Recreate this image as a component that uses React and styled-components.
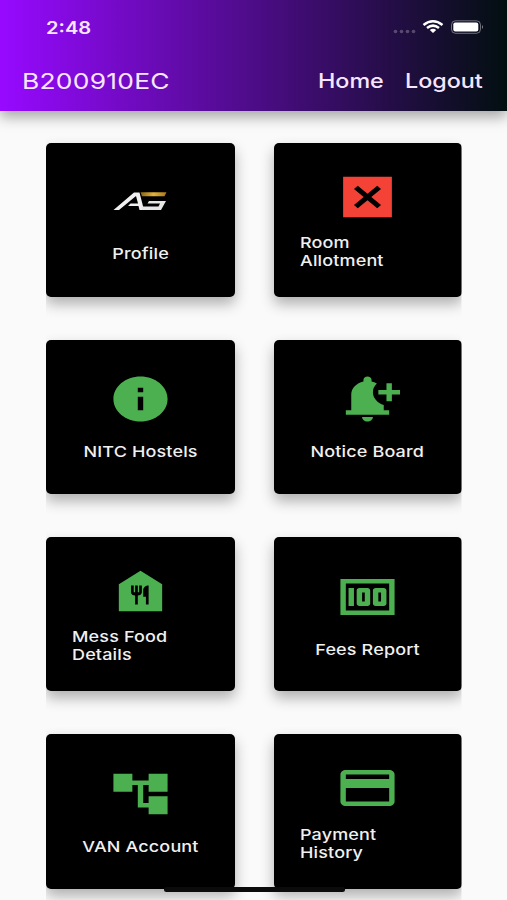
import React from 'react';
import styled, { createGlobalStyle } from 'styled-components';
import { MdAccountTree, MdFoodBank, MdInfo, MdMoney, MdNotificationAdd, MdPayment } from 'react-icons/md';

const GREEN = '#4caf50';
const RED = '#f44336';

const GlobalStyle = createGlobalStyle`
    * {
        box-sizing: border-box;
    }

    body {
        margin: 0;
        background: #fafafa;
        font-family: Inter, Roboto, sans-serif;
    }
`;

const Screen = styled.div`
    position: relative;
    height: 900px;
    overflow: hidden;
    background: #fafafa;
`;

const Header = styled.header`
    position: relative;
    height: 110.5px;
    color: #f6e6ff;
    background: linear-gradient(to right, #9709ff, #020f10);
    box-shadow: 0 6px 13px rgba(0, 0, 0, 0.34);
`;

const StatusBar = styled.div`
    display: flex;
    align-items: center;
    justify-content: space-between;
    height: 54px;
    padding: 0 23px 0 46px;
`;

const StatusIcons = styled.div`
    display: flex;
    align-items: center;
    height: 20px;

    svg {
        display: block;
    }
`;

const Wide = styled.span`
    display: inline-block;
    white-space: pre;
    transform: scaleX(${props => props.$stretch});
    transform-origin: ${props => props.$origin || 'left'} center;
`;

const Clock = styled(Wide)`
    padding-top: 2px;
    font-size: 17px;
    font-weight: 600;
`;

const NavBar = styled.nav`
    display: flex;
    align-items: center;
    height: 54px;
    padding: 0 25px 0 22px;
`;

const Title = styled(Wide)`
    flex: 1;
    font-size: 22px;
    letter-spacing: 0.2px;
`;

const NavLink = styled.a`
    width: ${props => props.$width}px;
    margin-left: 22px;
    font-size: 20px;
    font-weight: 500;
`;

const CardGrid = styled.main`
    display: grid;
    grid-template-columns: 188.5px 188.5px;
    grid-auto-rows: 154.5px;
    gap: 42.7px 39px;
    margin: 0 45.5px 0 46px;
    padding-top: 32px;
    clip-path: inset(0 0 -40px 0);
`;

const Card = styled.button`
    display: flex;
    flex-direction: column;
    align-items: center;
    justify-content: center;
    padding: 0 26px;
    border: 0;
    border-radius: 5px;
    color: #f0f0f0;
    font-family: inherit;
    background: #000;
    box-shadow: 0 7px 14px rgba(0, 0, 0, 0.3);
`;

const IconBox = styled.div`
    height: ${props => props.$height}px;
    color: ${props => props.$color};

    svg {
        display: block;
        width: 65px;
        height: 54px;
    }
`;

const Label = styled.div`
    align-self: ${props => props.$wrapped ? 'flex-start' : 'center'};
    margin-top: ${props => props.$wrapped ? 10.5 : 17}px;
    font-size: 15px;
    font-weight: 500;
    line-height: 18px;
    letter-spacing: 0.12px;
    text-align: left;
`;

const HomeIndicator = styled.div`
    position: absolute;
    left: 164px;
    bottom: 8.5px;
    width: 181px;
    height: 5px;
    border-radius: 3px;
    background: #0b0b0b;
`;

const Logo = () => (
    <svg viewBox="0 0 65 54">
        <defs>
            <linearGradient id="gold">
                <stop offset="0" stopColor="#8a6412" />
                <stop offset="0.5" stopColor="#e3b13e" />
                <stop offset="1" stopColor="#a8791b" />
            </linearGradient>
        </defs>
        <path d="M5.500 33 L26 15.500 H31.500 L36 33 H31.500 L30.500 29 H20 L22.500 26.500 H30 L28 19 L11 33 Z" fill="#f0f0f0" />
        <path d="M34 33 H53 L58 24 H41 L39.500 26.500 H52 L50.500 29.600 H33.500 Z" fill="#e6e6e6" />
        <path d="M32.500 15.200 H58.500 L56.500 19.300 H34 Z" fill="url(#gold)" />
    </svg>
);

const CrossBox = () => (
    <svg viewBox="0 0 24 24" fill="currentColor" preserveAspectRatio="none">
        <path d="M3 3v18h18V3H3zm14 12.590L15.590 17 12 13.410 8.410 17 7 15.590 10.590 12 7 8.410 8.410 7 12 10.590 15.590 7 17 8.410 13.410 12 17 15.590z" />
    </svg>
);

const cards = [
    { icon: Logo, height: 51, lines: ['Profile'] },
    { icon: CrossBox, color: RED, lines: ['Room', 'Allotment'] },
    { icon: MdInfo, lines: ['NITC Hostels'] },
    { icon: MdNotificationAdd, lines: ['Notice Board'] },
    { icon: MdFoodBank, lines: ['Mess Food', 'Details'] },
    { icon: MdMoney, lines: ['Fees Report'] },
    { icon: MdAccountTree, lines: ['VAN Account'] },
    { icon: MdPayment, lines: ['Payment', 'History'] }
];

export default class App extends React.Component {

    render() {
        return (
            <Screen>
                <GlobalStyle />
                <Header>
                    <StatusBar>
                        <Clock $stretch={1.18}>2:48</Clock>
                        <StatusIcons>
                            <svg width="91" height="20" viewBox="0 0 91 20">
                                <g fill="#fff" fillOpacity="0.25">
                                    <circle cx="2.500" cy="14.500" r="1.800" />
                                    <circle cx="8.500" cy="14.500" r="1.800" />
                                    <circle cx="14.500" cy="14.500" r="1.800" />
                                    <circle cx="20.500" cy="14.500" r="1.800" />
                                </g>
                                <g fill="none" stroke="#fff" strokeWidth="2.500">
                                    <path d="M30.500 8 Q40 0.500 49.500 8" />
                                    <path d="M34 11 Q40 6.300 46 11" />
                                </g>
                                <path d="M36.800 13 Q40 10.500 43.200 13 L40 16 Z" fill="#fff" />
                                <rect x="58.500" y="3.800" width="29" height="12.500" rx="4" fill="none" stroke="#fff" strokeOpacity="0.4" />
                                <rect x="60.300" y="5.500" width="25" height="9" rx="2" fill="#fff" />
                                <path d="M89 8 Q91 10 89 12 Z" fill="#fff" fillOpacity="0.5" />
                            </svg>
                        </StatusIcons>
                    </StatusBar>
                    <NavBar>
                        <Title $stretch={1.2}>B200910EC</Title>
                        <NavLink $width={65}><Wide $stretch={1.165}>Home</Wide></NavLink>
                        <NavLink $width={77}><Wide $stretch={1.165}>Logout</Wide></NavLink>
                    </NavBar>
                </Header>
                <CardGrid>
                    {cards.map(({ icon: Icon, color, height, lines }) => (
                        <Card key={lines[0]}>
                            <IconBox $color={color || GREEN} $height={height || 54}>
                                <Icon preserveAspectRatio="none" />
                            </IconBox>
                            <Label $wrapped={lines.length > 1}>
                                <Wide $stretch={1.2} $origin={lines.length > 1 ? 'left' : 'center'}>
                                    {lines.join('\n')}
                                </Wide>
                            </Label>
                        </Card>
                    ))}
                </CardGrid>
                <HomeIndicator />
            </Screen>
        )
    }
}
